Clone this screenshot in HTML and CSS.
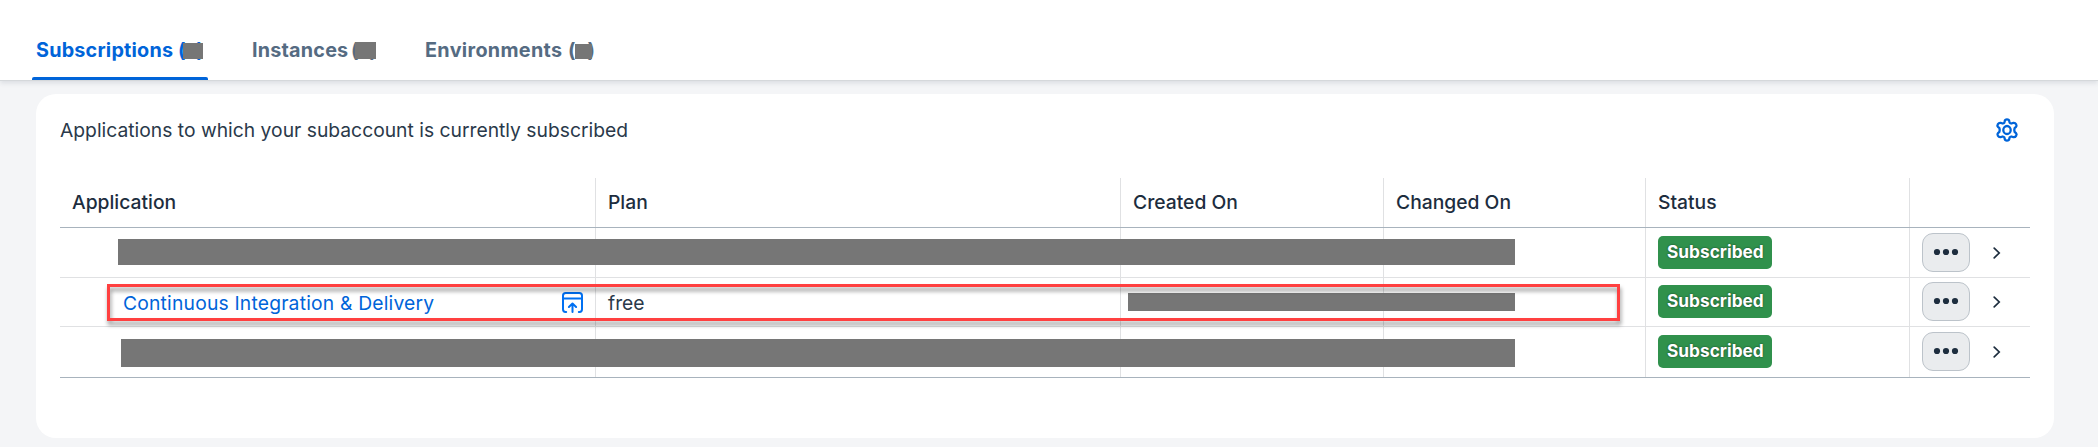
FILE: index.html
```html
<!DOCTYPE html>
<html lang="en">
<head>
<meta charset="utf-8">
<title>Subscriptions</title>
<link rel="stylesheet" href="styles.css">
</head>
<body>
<svg class="defs" width="0" height="0">
  <symbol id="chevron" viewBox="0 0 8 12"><path d="M1.2 1.2 6.2 6 1.2 10.8" fill="none" stroke="currentColor" stroke-width="1.7" stroke-linecap="round" stroke-linejoin="miter"/></symbol>
  <symbol id="dots" viewBox="0 0 26 8"><circle cx="4" cy="4" r="3.1"/><circle cx="13" cy="4" r="3.1"/><circle cx="22" cy="4" r="3.1"/></symbol>
</svg>
<nav class="tabs">
  <a class="tab tab-active"><span class="label">Subscriptions</span><span class="count count-a">(<i class="mask"></i><span>)</span></span></a>
  <a class="tab tab-instances"><span class="label">Instances</span><span class="count count-b">(<i class="mask"></i><span>)</span></span></a>
  <a class="tab tab-environments"><span class="label">Environments</span><span class="count count-c">(<i class="mask"></i><span>)</span></span></a>
</nav>
<main class="card">
  <div class="toolbar">
    <span class="intro">Applications to which your subaccount is currently subscribed</span>
    <svg class="gear" viewBox="0 0 24 24" fill="none" stroke="currentColor" stroke-width="2.3" stroke-linejoin="round"><path d="M9.7 3.2Q10 1.4 12 1.4T14.3 3.2L14.7 4.7Q15.3 5.3 16.2 5.5L18.4 4.9Q20.2 4.6 21.1 6.3T21 8.9L19.6 10.2Q19 12 19.6 13.8L21 15.1Q22.1 16.2 21.1 17.8T18.4 19.1L16.2 18.5Q15.3 18.7 14.7 19.3L14.3 20.8Q14 22.6 12 22.6T9.7 20.8L9.3 19.3Q8.7 18.7 7.8 18.5L5.6 19.1Q3.8 19.4 2.9 17.7T3 15.1L4.4 13.8Q5 12 4.4 10.2L3 8.9Q1.9 7.8 2.9 6.2T5.6 4.9L7.8 5.5Q8.7 5.3 9.3 4.7Z"/><ellipse cx="12" cy="12" rx="3.7" ry="4"/></svg>
  </div>
  <div class="table">
    <div class="row head">
      <div class="cell">Application</div><div class="cell">Plan</div><div class="cell">Created On</div><div class="cell">Changed On</div><div class="cell">Status</div><div class="cell"></div>
    </div>
    <div class="row">
      <div class="cell"></div><div class="cell"></div><div class="cell"></div><div class="cell"></div>
      <div class="cell"><span class="badge">Subscribed</span></div>
      <div class="cell actions"><button class="more"><svg><use href="#dots"/></svg></button><svg class="chevron"><use href="#chevron"/></svg></div>
      <i class="mask redact-first"></i>
    </div>
    <div class="row middle">
      <div class="cell app"><a class="link">Continuous Integration &amp; Delivery</a>
        <svg class="launch" viewBox="0 0 21 21" fill="none" stroke="currentColor" stroke-width="2" stroke-linecap="round" stroke-linejoin="round"><path d="M4.2 20H3.5Q1 20 1 17.3V3.7Q1 1 3.7 1H17.3Q20 1 20 3.7V17.3Q20 20 17.5 20H16.8M1 6.6H20M10.5 20V12M6.9 15 10.5 11.6 14.1 15"/></svg></div>
      <div class="cell"><span class="plan">free</span></div><div class="cell"></div><div class="cell"></div>
      <div class="cell"><span class="badge">Subscribed</span></div>
      <div class="cell actions"><button class="more"><svg><use href="#dots"/></svg></button><svg class="chevron"><use href="#chevron"/></svg></div>
      <i class="mask redact-dates"></i>
      <i class="highlight"></i>
    </div>
    <div class="row last">
      <div class="cell"></div><div class="cell"></div><div class="cell"></div><div class="cell"></div>
      <div class="cell"><span class="badge">Subscribed</span></div>
      <div class="cell actions"><button class="more"><svg><use href="#dots"/></svg></button><svg class="chevron"><use href="#chevron"/></svg></div>
      <i class="mask redact-last"></i>
    </div>
  </div>
</main>
</body>
</html>
```

FILE: styles.css
```css
* { box-sizing: border-box; }
body {
  margin: 0;
  height: 447px;
  overflow: hidden;
  background: #f4f5f7;
  color: #1d2d3e;
  font: 400 19.3px/24px Inter, Roboto, sans-serif;
}
.defs { position: absolute; }
.tabs {
  display: flex;
  gap: 39px;
  height: 81px;
  padding-left: 32px;
  background: #fff;
  border-bottom: 1px solid #d5d8db;
  box-shadow: 0 2px 5px rgba(34, 53, 72, .12);
}
.tab {
  position: relative;
  display: flex;
  justify-content: space-between;
  height: 80px;
  padding: 38px 4px 0;
  color: #556b82;
  font-size: 19.8px;
  font-weight: 650;
}
.label { letter-spacing: .2px; }
.tab-active { color: #0064d9; width: 176px; }
.tab-active::after {
  content: "";
  position: absolute;
  left: 0;
  right: 0;
  bottom: 0;
  height: 3px;
  border-radius: 2px 2px 0 0;
  background: #0064d9;
}
.tab-instances { width: 134px; padding-left: 5px; }
.tab-environments { width: 179px; padding-left: 5px; }
.tab-environments .label { letter-spacing: .32px; }
.count { position: relative; display: flex; justify-content: space-between; width: 26px; }
.mask { background: #767676; }
.count .mask { position: absolute; top: 4px; left: 4px; height: 17px; width: 21px; }
.count-a .mask { top: 5px; left: 5px; height: 16px; width: 20px; }
.count-c .mask { top: 6px; left: 7px; height: 15px; width: 17px; }
.count-c { width: 27px; }
.card {
  height: 344px;
  margin: 13px 44px 0 36px;
  padding: 0 24px;
  background: #fff;
  border-radius: 20px;
}
.toolbar {
  display: flex;
  align-items: center;
  justify-content: space-between;
  height: 84px;
  padding: 0 11px 13px 0;
}
.intro, .plan { color: #2a394a; }
.gear { width: 24px; height: 24px; color: #0064d9; }
.row {
  position: relative;
  display: grid;
  grid-template-columns: 536px 525px 263px 262px 264px 1fr;
  height: 50px;
  border-bottom: 1px solid #e0e1e3;
}
.row.middle { height: 49px; }
.row.last { height: 51px; border-color: #a8b3bd; }
.row.head { border-color: #a8b3bd; font-weight: 500; }
.cell {
  display: flex;
  align-items: center;
  padding: 0 12px;
  border-right: 1px solid #e0e1e3;
}
.head .cell, .middle .cell, .last .cell { padding-bottom: 1px; }
.cell:nth-child(6) { border-right: 0; }
.cell.app { justify-content: space-between; padding-left: 63px; }
.link { color: #0064d9; letter-spacing: .19px; }
.link, .plan { margin-top: 3px; }
.launch { width: 21px; height: 21px; margin-top: 2px; color: #0070f2; }
.badge {
  width: 114px;
  height: 33px;
  padding-left: 9px;
  border-radius: 5px;
  background: #30914c;
  color: #fff;
  font: 700 17.3px/32px Inter, Roboto, sans-serif;
  text-shadow: 0 0 2px rgba(0, 0, 0, .6);
}
.more {
  display: grid;
  place-items: center;
  width: 48px;
  height: 39px;
  padding: 0;
  border: 1px solid #bcc3ca;
  border-radius: 11px;
  background: #eaecee;
}
.more svg { width: 26px; height: 8px; fill: #1d2d3e; margin-top: -1px; }
.cell.actions { gap: 23px; }
.chevron { width: 8px; height: 12px; color: #1d2d3e; }
.redact-first { position: absolute; left: 58px; top: 11px; width: 1397px; height: 26px; }
.redact-dates { position: absolute; left: 1068px; top: 15px; width: 387px; height: 18px; }
.redact-last { position: absolute; left: 61px; top: 12px; width: 1394px; height: 28px; }
.highlight {
  position: absolute;
  z-index: 1;
  left: 47px;
  top: 6px;
  width: 1513px;
  height: 37px;
  border: 3px solid #ff4040;
  filter: drop-shadow(1px 4px 2px rgba(0, 0, 0, .42));
}
```
